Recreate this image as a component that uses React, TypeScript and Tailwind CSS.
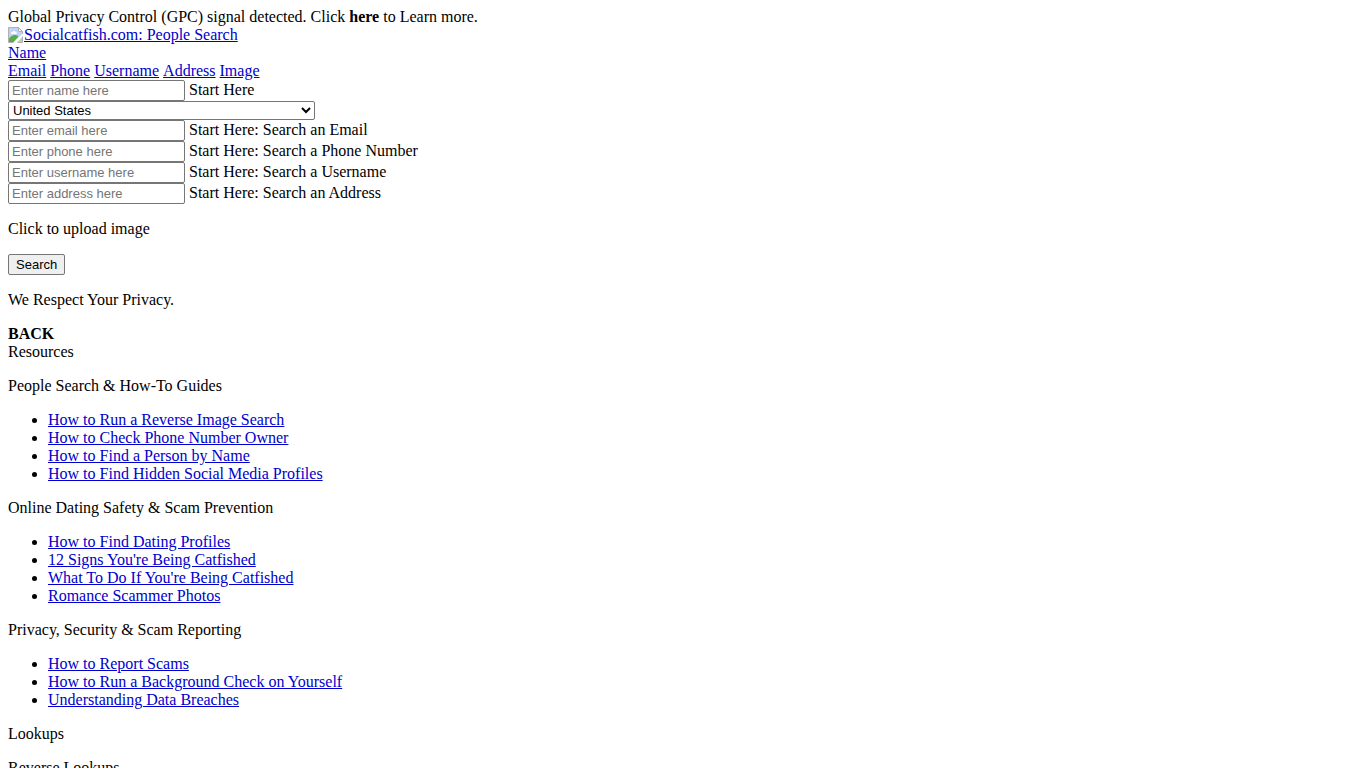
import type { ReactNode } from "react"

const searchTabs = ["Email", "Phone", "Username", "Address", "Image"]

const searchFields = [
  { id: "email", placeholder: "Enter email here", label: "Start Here: Search an Email" },
  { id: "phone", placeholder: "Enter phone here", label: "Start Here: Search a Phone Number" },
  { id: "username", placeholder: "Enter username here", label: "Start Here: Search a Username" },
  { id: "address", placeholder: "Enter address here", label: "Start Here: Search an Address" },
]

const resources = [
  {
    title: "People Search & How-To Guides",
    links: [
      "How to Run a Reverse Image Search",
      "How to Check Phone Number Owner",
      "How to Find a Person by Name",
      "How to Find Hidden Social Media Profiles",
    ],
  },
  {
    title: "Online Dating Safety & Scam Prevention",
    links: [
      "How to Find Dating Profiles",
      "12 Signs You're Being Catfished",
      "What To Do If You're Being Catfished",
      "Romance Scammer Photos",
    ],
  },
  {
    title: "Privacy, Security & Scam Reporting",
    links: [
      "How to Report Scams",
      "How to Run a Background Check on Yourself",
      "Understanding Data Breaches",
    ],
  },
]

function TextLink({ children }: { children: ReactNode }) {
  return (
    <a href="#" className="text-[#0000cc] underline">
      {children}
    </a>
  )
}

function BrokenImageIcon() {
  return (
    <svg width="16" height="16" viewBox="0 0 16 16" className="shrink-0" aria-hidden="true">
      <path d="M1 1h9l4 4v2L6 15H1z" fill="#c0d2f5" />
      <path d="M1 15V11.5C2.5 9.500 4.500 8 7 8c1.500 0 2.500.500 3.500 1.500L5.500 15z" fill="#5bab4d" />
      <path d="M3 6.500C3 5.500 3.800 5 4.500 5c.5-1.500 2.800-1.500 3.300 0C9 5 9.300 7 8 7H3.500z" fill="#fff" />
      <path d="M10 1v4h4z" fill="#fff" />
      <path d="M5.500 15.500h-5V.500h10l4 4V7" fill="none" stroke="#b0b0b0" />
      <path d="M10.500.500v4h4" fill="none" stroke="#b0b0b0" />
      <path d="M14 10v5H9.500z" fill="#b5d6ae" />
      <path d="M14.500 9.500v6h-5" fill="none" stroke="#b0b0b0" />
    </svg>
  )
}

interface SearchFieldProps {
  id: string
  placeholder: string
  label: string
}

function SearchField({ id, placeholder, label }: SearchFieldProps) {
  return (
    <div className="flex items-start gap-1">
      <input
        id={id}
        type="text"
        placeholder={placeholder}
        className="h-[21px] w-[177px] rounded-xs border border-[#767676] bg-white px-[3px] font-['Liberation_Sans',Arial,sans-serif] text-[13px] placeholder:text-[#757575]"
      />
      <label htmlFor={id} className="leading-5">
        {label}
      </label>
    </div>
  )
}

export default function App() {
  return (
    <main className="min-h-screen bg-white p-2 font-['Liberation_Serif','Times_New_Roman',serif] text-base leading-[18px] text-black">
      <div>
        Global Privacy Control (GPC) signal detected. Click <b>here</b> to Learn more.
      </div>
      <div>
        <a href="#" className="flex items-center text-[#0000cc] underline">
          <BrokenImageIcon />
          <span>Socialcatfish.com: People Search</span>
        </a>
      </div>
      <div>
        <TextLink>Name</TextLink>
      </div>
      <nav className="flex gap-1">
        {searchTabs.map((tab) => (
          <TextLink key={tab}>{tab}</TextLink>
        ))}
      </nav>

      <form>
        <SearchField id="name" placeholder="Enter name here" label="Start Here" />
        <select
          aria-label="Country"
          className="block h-[19px] w-[307px] rounded-xs border border-[#767676] bg-white font-['Liberation_Sans',Arial,sans-serif] text-[13px]"
        >
          <option>United States</option>
        </select>
        {searchFields.map((field) => (
          <SearchField key={field.id} {...field} />
        ))}
        <p className="my-4">Click to upload image</p>
        <button
          type="button"
          className="block h-[21px] rounded-xs border border-[#767676] bg-[#efefef] px-[7px] font-['Liberation_Sans',Arial,sans-serif] text-[13px] leading-none"
        >
          Search
        </button>
      </form>
      <p className="my-4">We Respect Your Privacy.</p>

      <div className="font-bold">BACK</div>
      <div>Resources</div>
      {resources.map((group) => (
        <section key={group.title}>
          <p className="my-4">{group.title}</p>
          <ul className="my-4 list-disc pl-10">
            {group.links.map((link) => (
              <li key={link}>
                <TextLink>{link}</TextLink>
              </li>
            ))}
          </ul>
        </section>
      ))}
      <p className="my-4">Lookups</p>
      <p className="my-4">Reverse Lookups</p>
    </main>
  )
}
